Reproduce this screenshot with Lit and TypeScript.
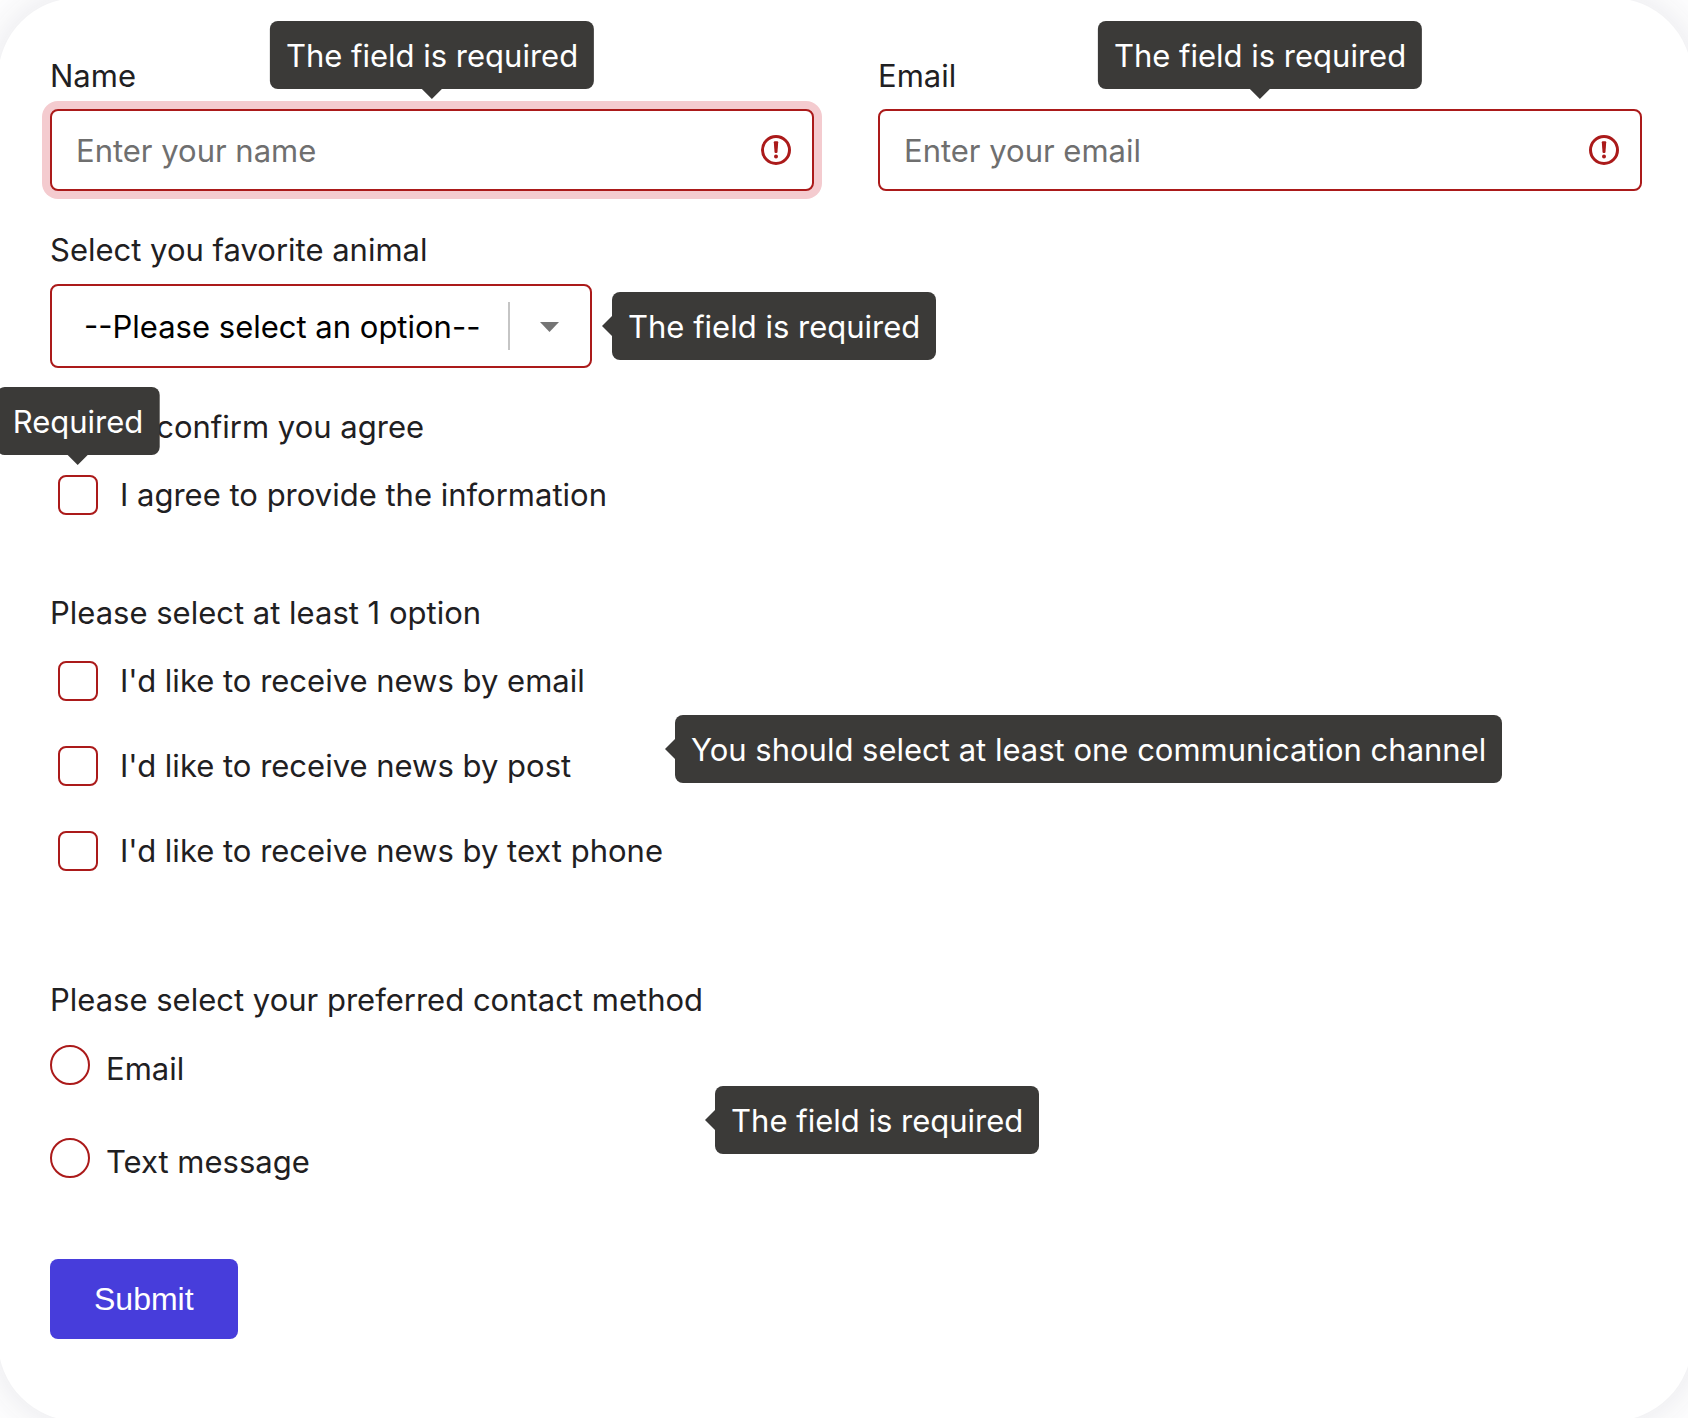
import { LitElement, html, css } from "lit";
import { customElement, property } from "lit/decorators.js";
import { classMap } from "lit/directives/class-map.js";

interface TextField {
  id: string;
  label: string;
  type: string;
  placeholder: string;
  highlighted: boolean;
}

const textFields: TextField[] = [
  { id: "name", label: "Name", type: "text", placeholder: "Enter your name", highlighted: true },
  { id: "email", label: "Email", type: "email", placeholder: "Enter your email", highlighted: false },
];

const channels = [
  { id: "news-email", label: "I'd like to receive news by email" },
  { id: "news-post", label: "I'd like to receive news by post" },
  { id: "news-text", label: "I'd like to receive news by text phone" },
];

const contactMethods = [
  { id: "contact-email", label: "Email" },
  { id: "contact-text", label: "Text message" },
];

/** Dark bubble that points at the element it is anchored to. */
@customElement("error-tip")
class ErrorTip extends LitElement {
  @property({ reflect: true }) placement: "top" | "right" = "top";

  static styles = css`
    :host {
      position: absolute;
      z-index: 1;
      padding: 15px 16px 13px;
      border-radius: 8px;
      background: #3b3a38;
      color: #fff;
      line-height: 40px;
      white-space: nowrap;
    }
    :host([placement="top"]) {
      left: 50%;
      bottom: calc(100% + 20px);
      transform: translateX(-50%);
    }
    :host([placement="right"]) {
      left: calc(100% + var(--tip-gap, 20px));
      top: 50%;
      transform: translateY(-50%);
    }
    .arrow {
      position: absolute;
      border: 10px solid transparent;
    }
    :host([placement="top"]) .arrow {
      top: 100%;
      left: calc(50% - 10px);
      border-top-color: #3b3a38;
      border-bottom-width: 0;
    }
    :host([placement="right"]) .arrow {
      right: 100%;
      top: calc(50% - 10px);
      border-right-color: #3b3a38;
      border-left-width: 0;
    }
  `;

  render() {
    return html`<slot></slot><span class="arrow"></span>`;
  }
}

@customElement("app-root")
class AppRoot extends LitElement {
  static styles = css`
    :host {
      display: grid;
      min-height: 100vh;
      overflow: hidden;
      background: #fff;
      color: #1f2022;
      font-family: Inter, "Liberation Sans", sans-serif;
      font-size: 31px;
      line-height: 40px;
    }
    * {
      box-sizing: border-box;
    }
    .card {
      margin: -2px -4px -3px -2px;
      padding: 58px 50px 52px 52px;
      border-radius: 80px;
      background: #fff;
      box-shadow: 0 0 48px rgba(40, 40, 80, 0.13);
    }
    .columns {
      display: grid;
      grid-template-columns: 1fr 1fr;
      gap: 64px;
      margin-bottom: 39px;
    }
    .field {
      display: flex;
      flex-direction: column;
      align-items: stretch;
      gap: 13px;
    }
    .field.compact {
      align-items: flex-start;
      gap: 14px;
      margin-bottom: 39px;
    }
    .control {
      position: relative;
      display: grid;
      align-items: center;
    }
    .control > input,
    .control > select,
    .control > svg {
      grid-area: 1 / 1;
    }
    input,
    select,
    button {
      margin: 0;
      font: inherit;
    }
    .text,
    .select {
      width: 100%;
      border: 2px solid #ab1a1a;
      border-radius: 8px;
      background: #fff;
      outline: none;
    }
    .text {
      height: 82px;
      padding: 0 70px 0 24px;
      color: #1f2022;
    }
    .text::placeholder {
      color: #6f6f6f;
      opacity: 1;
    }
    .text.highlighted {
      box-shadow: 0 0 0 8px #f4cbcf;
    }
    .alert {
      justify-self: end;
      width: 32px;
      height: 32px;
      margin-right: 22px;
      pointer-events: none;
    }
    .select {
      appearance: none;
      min-width: 542px;
      height: 84px;
      padding: 2px 100px 0 32px;
      color: #000;
    }
    .caret {
      justify-self: end;
      width: 52px;
      height: 48px;
      margin-right: 32px;
      pointer-events: none;
    }
    .group {
      position: relative;
      width: fit-content;
      --tip-gap: 12px;
    }
    fieldset {
      min-width: 0;
      margin: 0;
      padding: 0;
      border: 0;
    }
    .confirm {
      margin-bottom: 78px;
    }
    .channels {
      margin-bottom: 75px;
      padding-bottom: 34px;
    }
    .contact {
      padding-bottom: 77px;
    }
    legend {
      padding: 0;
    }
    .options {
      display: flex;
      flex-direction: column;
      gap: 45px;
      padding: 28px 0 0 8px;
    }
    .option {
      display: flex;
      gap: 22px;
    }
    .box {
      position: relative;
      display: flex;
      flex: none;
      width: 40px;
      height: 40px;
    }
    .tick,
    .radio {
      appearance: none;
      width: 40px;
      height: 40px;
      border: 2px solid #ab1a1a;
      border-radius: 8px;
      background: #fff;
    }
    .radio {
      border-radius: 50%;
    }
    .radios {
      gap: 49px;
      padding: 25px 0 0;
    }
    .radios .option {
      gap: 16px;
    }
    .radios label {
      padding-top: 4px;
    }
    .submit {
      height: 80px;
      padding: 0 44px;
      border: 0;
      border-radius: 8px;
      background: #473ddb;
      color: #fff;
      font-family: "Liberation Sans", Arial, sans-serif;
      font-size: 32px;
    }
  `;

  private textField(field: TextField) {
    return html`
      <div class="field">
        <label for=${field.id}>${field.label}</label>
        <div class="control">
          <input
            class=${classMap({ text: true, highlighted: field.highlighted })}
            id=${field.id}
            type=${field.type}
            placeholder=${field.placeholder}
          />
          <svg class="alert" viewBox="0 0 32 32" aria-hidden="true">
            <circle cx="16" cy="16" r="13.5" fill="none" stroke="#ab1a1a" stroke-width="3" />
            <path d="M13.800 8.200q0-1 1-1h2.400q1 0 1 1l-.7 9.800q-.1 1-1 1h-1q-.9 0-1-1z" fill="#ab1a1a" />
            <circle cx="16" cy="22.500" r="2" fill="#ab1a1a" />
          </svg>
          <error-tip placement="top">The field is required</error-tip>
        </div>
      </div>
    `;
  }

  render() {
    return html`
      <form class="card" novalidate @submit=${(e: Event) => e.preventDefault()}>
        <div class="columns">${textFields.map((field) => this.textField(field))}</div>

        <div class="field compact">
          <label for="animal">Select you favorite animal</label>
          <div class="control">
            <select class="select" id="animal">
              <option value="">--Please select an option--</option>
            </select>
            <svg class="caret" viewBox="0 0 52 48" aria-hidden="true">
              <rect width="2" height="48" fill="#c5c5c5" />
              <path d="M32 20h19l-9.500 10z" fill="#757575" />
            </svg>
            <error-tip placement="right">The field is required</error-tip>
          </div>
        </div>

        <div class="group confirm">
          <fieldset>
            <legend>Please confirm you agree</legend>
            <div class="options">
              <div class="option">
                <span class="box">
                  <input class="tick" id="agree" type="checkbox" />
                  <error-tip placement="top">Required</error-tip>
                </span>
                <label for="agree">I agree to provide the information</label>
              </div>
            </div>
          </fieldset>
        </div>

        <div class="group channels">
          <fieldset>
            <legend>Please select at least 1 option</legend>
            <div class="options">
              ${channels.map(
                (channel) => html`
                  <div class="option">
                    <span class="box"><input class="tick" id=${channel.id} type="checkbox" /></span>
                    <label for=${channel.id}>${channel.label}</label>
                  </div>
                `
              )}
            </div>
          </fieldset>
          <error-tip placement="right">You should select at least one communication channel</error-tip>
        </div>

        <div class="group contact">
          <fieldset>
            <legend>Please select your preferred contact method</legend>
            <div class="options radios">
              ${contactMethods.map(
                (method) => html`
                  <div class="option">
                    <span class="box"><input class="radio" id=${method.id} type="radio" name="contact" /></span>
                    <label for=${method.id}>${method.label}</label>
                  </div>
                `
              )}
            </div>
          </fieldset>
          <error-tip placement="right">The field is required</error-tip>
        </div>

        <button class="submit" type="submit">Submit</button>
      </form>
    `;
  }
}
